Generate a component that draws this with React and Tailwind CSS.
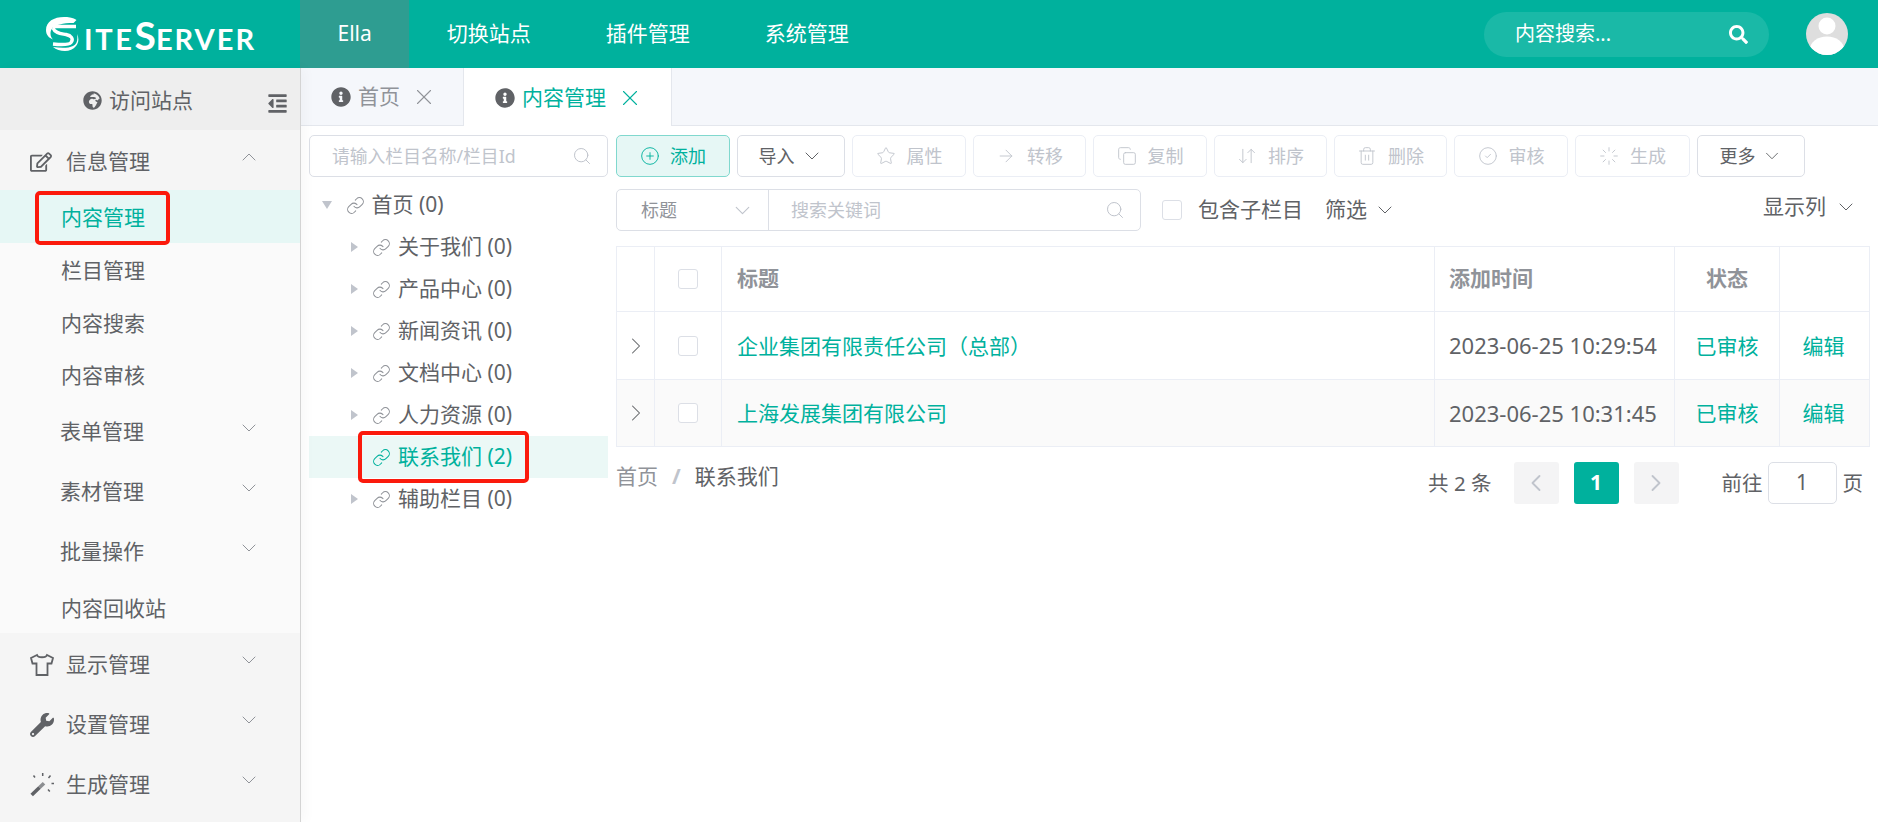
import {
  ArrowDownUp,
  ArrowRight,
  ChevronDown,
  ChevronLeft,
  ChevronRight,
  ChevronUp,
  CircleCheck,
  CirclePlus,
  Copy,
  Link,
  Loader,
  Search,
  Star,
  Trash2,
  X,
} from 'lucide-react';
import {
  FaGlobeAfrica,
  FaInfoCircle,
  FaOutdent,
  FaRegEdit,
  FaSearch,
  FaWrench,
} from 'react-icons/fa';

const font = 'font-["Noto_Sans","Noto_Sans_CJK_SC",sans-serif]';

function Logo() {
  return (
    <div className="flex h-full w-[300px] items-center pl-[45px] text-white">
      <svg viewBox="0 0 40 36" className="h-[36px] w-[40px] shrink-0" fill="none" stroke="white">
        <path d="M25 1.500C12-.5 1 4 1 14c0 5 3 8 7 9.500-3-3-3.500-8-.5-11.500 3-3 10-5 21-5l3-3C30 3 28 2 25 1.500z" fill="white" stroke="none" />
        <path d="M8 10.500h23M8 12c2 5.500 8 5.500 13 6.500s8 4 5 8c-2 2.500-8 2.500-18 1.500" strokeWidth="3.400" />
        <path d="M8 31c6 5 18 6 23-1 3-4 3-8 1-12 1 6 0 10-4 12-5 2.500-13 2-20 1z" fill="white" stroke="none" />
      </svg>
      <div className="-ml-[1px] flex items-baseline pt-[2px] font-['Lato',sans-serif] leading-none font-bold">
        <span className="text-[29px] tracking-[2.600px]">ITE</span>
        <span className="text-[39px]">S</span>
        <span className="text-[29px] tracking-[2px]">ERVER</span>
      </div>
    </div>
  );
}

function TopBar() {
  return (
    <header className="flex h-[68px] shrink-0 items-center bg-[#00b19d] text-[21px] text-white">
      <Logo />
      <div className="flex h-full items-center bg-[#2e9d91] px-[37.500px]">Ella</div>
      <div className="flex h-full items-center px-[37.500px]">切换站点</div>
      <div className="flex h-full items-center px-[37.500px]">插件管理</div>
      <div className="flex h-full items-center px-[37.500px]">系统管理</div>
      <div className="ml-auto flex h-[45px] w-[285px] items-center justify-between rounded-full bg-white/10 pr-[21px] pl-[31px] text-[20px]">
        内容搜索...
        <FaSearch className="h-[19px] w-[19px]" />
      </div>
      <div className="mr-[30px] ml-[37px] h-[42px] w-[42px] overflow-hidden rounded-full bg-[#dedede]">
        <svg viewBox="0 0 42 42" className="h-full w-full" fill="white">
          <circle cx="21" cy="13" r="8.500" />
          <ellipse cx="21" cy="36" rx="17" ry="12.500" />
        </svg>
      </div>
    </header>
  );
}

function SideGroup({ icon, label, open }) {
  return (
    <div className="flex h-[60px] items-center pt-[3px] pr-[39px] pl-[30px] text-[21px] text-[#606266]">
      <span className="flex w-[36px] shrink-0 items-center text-[#606266]">{icon}</span>
      {label}
      {open ? (
        <ChevronUp className="mb-[9px] ml-auto h-[24px] w-[24px] text-[#909399]" strokeWidth={1} />
      ) : (
        <ChevronDown className="mb-[9px] ml-auto h-[24px] w-[24px] text-[#909399]" strokeWidth={1} />
      )}
    </div>
  );
}

function SubItem({ label, active }) {
  return (
    <div
      className={
        active
          ? 'relative flex h-[53px] items-center bg-[#e6f7f5] pt-[3px] pl-[61px] text-[21px] text-[#00b19d]'
          : 'flex h-[52.500px] items-center pt-[3px] pl-[61px] text-[21px] text-[#606266]'
      }
    >
      {label}
      {active && (
        <span className="absolute top-[1px] left-[35px] h-[54px] w-[135px] rounded-[5px] border-[4px] border-[#fb1a0c]" />
      )}
    </div>
  );
}

function SubGroup({ label }) {
  return (
    <div className="flex h-[60px] items-center pt-[3px] pr-[39px] pl-[60px] text-[21px] text-[#606266]">
      {label}
      <ChevronDown className="mb-[9px] ml-auto h-[24px] w-[24px] text-[#909399]" strokeWidth={1} />
    </div>
  );
}

function Sidebar() {
  return (
    <aside className="z-10 w-[301px] shrink-0 border-r border-[#d4d4d4] bg-[#f5f5f5] shadow-[4px_0_12px_rgba(0,0,0,0.03)]">
      <div className="relative flex h-[62px] items-center justify-center bg-[#eeeeee] pt-[3px] pr-[24px] text-[21px] text-[#606266]">
        <FaGlobeAfrica className="mr-[7px] h-[19px] w-[19px]" />
        访问站点
        <FaOutdent className="absolute top-[25px] right-[12px] h-[21px] w-[21px]" />
      </div>
      <SideGroup icon={<FaRegEdit className="h-[22px] w-[22px]" />} label="信息管理" open />
      <div className="bg-[#fafafa]">
        <SubItem label="内容管理" active />
        <SubItem label="栏目管理" />
        <SubItem label="内容搜索" />
        <SubItem label="内容审核" />
        <SubGroup label="表单管理" />
        <SubGroup label="素材管理" />
        <SubGroup label="批量操作" />
        <SubItem label="内容回收站" />
      </div>
      <SideGroup
        icon={
          <svg viewBox="0 0 24 24" className="h-[24px] w-[24px]" fill="none" stroke="currentColor" strokeWidth="1.800">
            <path d="M7 2 1 5l1.500 5.500H6.500V22h11V10.500h4L23 5l-6-3c-1 3-9 3-10 0z" />
          </svg>
        }
        label="显示管理"
      />
      <SideGroup icon={<FaWrench className="h-[24px] w-[24px]" />} label="设置管理" />
      <SideGroup
        icon={
          <svg viewBox="0 0 24 24" className="h-[24px] w-[24px]" fill="none" stroke="currentColor">
            <path d="M1.700 22 9.500 14.500" strokeWidth="3.600" />
            <path d="M9.500 14.500 14 10.300" strokeWidth="3.600" strokeOpacity="0.700" />
            <path d="M12.700 0v3M3.500 2.500l1.500 2M20.500 2.500l-2 2.500M21.500 10.500h3M18 16.500l1.800 2" strokeWidth="1.500" />
          </svg>
        }
        label="生成管理"
      />
    </aside>
  );
}

function TabBar() {
  return (
    <div className="flex h-[58px] shrink-0 border-b border-[#e4e7ed] bg-[#f5f7fb] text-[21px]">
      <div className="flex w-[163px] items-center border-r border-[#e4e7ed] pt-[1px] pl-[30px] text-[#909399]">
        <FaInfoCircle className="mr-[7px] h-[20px] w-[20px] text-[#606266]" />
        首页
        <X className="ml-[11px] h-[26px] w-[26px]" strokeWidth={1} />
      </div>
      <div className="-mb-[1px] flex w-[208px] items-center border-r border-[#e4e7ed] bg-white pt-[1px] pl-[31px] text-[#00b19d]">
        <FaInfoCircle className="mr-[7px] h-[20px] w-[20px] text-[#606266]" />
        内容管理
        <X className="ml-[11px] h-[26px] w-[26px]" strokeWidth={1} />
      </div>
    </div>
  );
}

function TreeRow({ label, top, active, leaf }) {
  return (
    <div
      className={
        active
          ? 'relative flex h-[42px] items-center bg-[#ebf8f6] pl-[63px] text-[#00b19d]'
          : top
            ? 'flex h-[42px] items-center pl-[13px] text-[#606266]'
            : 'flex h-[42px] items-center pl-[42px] text-[#606266]'
      }
    >
      {!leaf && (
        <span
          className={
            top
              ? 'mr-[13.500px] h-0 w-0 border-x-[5px] border-t-[8px] border-x-transparent border-t-[#c0c4cc]'
              : 'mr-[14px] h-0 w-0 border-y-[5px] border-l-[7px] border-y-transparent border-l-[#c0c4cc]'
          }
        />
      )}
      <Link
        className={
          active
            ? 'mr-[7px] h-[19px] w-[19px] text-[#00b19d]'
            : 'mr-[7px] h-[19px] w-[19px] text-[#909399]'
        }
        strokeWidth={1.300}
      />
      {label}
      {active && (
        <span className="absolute -top-[5px] left-[49px] h-[52px] w-[171px] rounded-[5px] border-[4px] border-[#fb1a0c]" />
      )}
    </div>
  );
}

function Tree() {
  return (
    <div className="w-[299px] shrink-0 text-[21px]">
      <div className="flex h-[42px] items-center justify-between rounded-[5px] border border-[#dcdfe6] pr-[15px] pl-[22px] text-[17.800px] text-[#c0c4cc]">
        请输入栏目名称/栏目Id
        <Search className="h-[20px] w-[20px]" strokeWidth={1.200} />
      </div>
      <div className="mt-[7px]">
        <TreeRow label="首页 (0)" top />
        <TreeRow label="关于我们 (0)" />
        <TreeRow label="产品中心 (0)" />
        <TreeRow label="新闻资讯 (0)" />
        <TreeRow label="文档中心 (0)" />
        <TreeRow label="人力资源 (0)" />
        <TreeRow label="联系我们 (2)" active leaf />
        <TreeRow label="辅助栏目 (0)" />
      </div>
    </div>
  );
}

function ToolButton({ icon, label, width }) {
  return (
    <button className={`flex h-[42px] items-center justify-center gap-[11px] rounded-[5px] border border-[#ebeef5] text-[18px] text-[#c0c4cc] ${width}`}>
      {icon}
      {label}
    </button>
  );
}

function Toolbar() {
  const ic = 'h-[20px] w-[20px]';
  return (
    <div className="flex gap-[7px]">
      <button className="flex h-[42px] w-[114px] items-center justify-center gap-[10px] rounded-[5px] border border-[#80d8ce] bg-[#e6f7f5] text-[18px] text-[#00b19d]">
        <CirclePlus className={ic} strokeWidth={1.100} />
        添加
      </button>
      <button className="flex h-[42px] w-[108px] items-center justify-center gap-[5px] rounded-[5px] border border-[#dcdfe6] text-[18px] text-[#606266]">
        导入
        <ChevronDown className="h-[24px] w-[24px]" strokeWidth={1} />
      </button>
      <ToolButton icon={<Star className={ic} strokeWidth={1.100} />} label="属性" width="w-[114px]" />
      <ToolButton icon={<ArrowRight className={ic} strokeWidth={1.100} />} label="转移" width="w-[113px]" />
      <ToolButton icon={<Copy className={ic} strokeWidth={1.100} />} label="复制" width="w-[114px]" />
      <ToolButton icon={<ArrowDownUp className={ic} strokeWidth={1.100} />} label="排序" width="w-[113px]" />
      <ToolButton icon={<Trash2 className={ic} strokeWidth={1.100} />} label="删除" width="w-[113px]" />
      <ToolButton icon={<CircleCheck className={ic} strokeWidth={1.100} />} label="审核" width="w-[114px]" />
      <ToolButton icon={<Loader className={ic} strokeWidth={1.100} />} label="生成" width="w-[115px]" />
      <button className="flex h-[42px] w-[108px] items-center justify-center gap-[5px] rounded-[5px] border border-[#dcdfe6] text-[18px] text-[#606266]">
        更多
        <ChevronDown className="h-[22px] w-[22px]" strokeWidth={1} />
      </button>
    </div>
  );
}

function FilterRow() {
  return (
    <div className="mt-[12px] flex h-[42px] items-center text-[21px] text-[#606266]">
      <div className="flex h-full w-[525px] rounded-[5px] border border-[#dcdfe6] text-[18px]">
        <div className="flex w-[152px] items-center justify-between border-r border-[#dcdfe6] pr-[13px] pl-[24px] text-[#909399]">
          标题
          <ChevronDown className="h-[25px] w-[25px] text-[#c0c4cc]" strokeWidth={1.100} />
        </div>
        <div className="flex flex-1 items-center justify-between pr-[15px] pl-[22px] text-[#c0c4cc]">
          搜索关键词
          <Search className="h-[20px] w-[20px]" strokeWidth={1.200} />
        </div>
      </div>
      <span className="mr-[16px] ml-[21px] h-[20px] w-[20px] rounded-[3px] border border-[#dcdfe6] bg-white" />
      包含子栏目
      <span className="ml-[22px]">筛选</span>
      <ChevronDown className="ml-[6px] h-[24px] w-[24px]" strokeWidth={1} />
      <span className="mb-[6px] ml-auto">显示列</span>
      <ChevronDown className="mr-[11px] mb-[6px] ml-[8px] h-[24px] w-[24px]" strokeWidth={1} />
    </div>
  );
}

const rows = [
  { title: '企业集团有限责任公司（总部）', time: '2023-06-25 10:29:54' },
  { title: '上海发展集团有限公司', time: '2023-06-25 10:31:45' },
];

function ContentTable() {
  const cell = 'border border-[#ebeef5] px-[15px]';
  const timeCell = 'border border-[#ebeef5] px-[14px]';
  return (
    <table className="mt-[15px] w-[1253px] table-fixed border-collapse text-[21px]">
      <colgroup>
        <col className="w-[38px]" />
        <col className="w-[67px]" />
        <col className="w-[713px]" />
        <col className="w-[240px]" />
        <col className="w-[105px]" />
        <col className="w-[90px]" />
      </colgroup>
      <thead>
        <tr className="h-[65px] font-bold text-[#909399]">
          <th className={cell} />
          <th className={cell}>
            <span className="mx-auto block h-[20px] w-[20px] rounded-[3px] border border-[#dcdfe6]" />
          </th>
          <th className={`${cell} text-left`}>标题</th>
          <th className={`${timeCell} text-left`}>添加时间</th>
          <th className={`${cell} text-center`}>状态</th>
          <th className={cell} />
        </tr>
      </thead>
      <tbody>
        {rows.map((row, i) => (
          <tr key={row.time} className={i === 1 ? 'h-[67px] bg-[#fafafa]' : 'h-[68px]'}>
            <td className="border border-[#ebeef5] text-center text-[#606266]">
              <ChevronRight className="mx-auto h-[28px] w-[28px]" strokeWidth={0.900} />
            </td>
            <td className={cell}>
              <span className="mx-auto block h-[20px] w-[20px] rounded-[3px] border border-[#dcdfe6] bg-white" />
            </td>
            <td className={`${cell} pt-[2px] text-[#00b19d]`}>{row.title}</td>
            <td className={`${timeCell} text-[22px] text-[#606266]`}>{row.time}</td>
            <td className={`${cell} pt-[2px] text-center text-[#00b19d]`}>已审核</td>
            <td className={`${cell} pt-[2px] pr-[17px] text-center text-[#00b19d]`}>编辑</td>
          </tr>
        ))}
      </tbody>
    </table>
  );
}

function Footer() {
  return (
    <div className="flex items-start text-[21px] text-[#606266]">
      <div className="mt-[14px] flex items-center">
        <span className="text-[#909399]">首页</span>
        <span className="mx-[14px] font-bold text-[#c0c4cc]">/</span>
        联系我们
      </div>
      <div className="mt-[15px] ml-auto flex items-center">
        <span className="mr-[22px] text-[20.500px]">共 2 条</span>
        <span className="flex h-[42px] w-[45px] items-center justify-center rounded-[3px] bg-[#f4f4f5] text-[#c0c4cc]">
          <ChevronLeft className="h-[28px] w-[28px]" strokeWidth={1.600} />
        </span>
        <span className="mx-[15px] flex h-[42px] w-[45px] items-center justify-center rounded-[3px] bg-[#00b19d] font-bold text-white">
          1
        </span>
        <span className="flex h-[42px] w-[45px] items-center justify-center rounded-[3px] bg-[#f4f4f5] text-[#c0c4cc]">
          <ChevronRight className="h-[28px] w-[28px]" strokeWidth={1.600} />
        </span>
        <span className="mr-[5px] ml-[43px] text-[20.500px]">前往</span>
        <span className="flex h-[42px] w-[69px] items-center justify-center rounded-[5px] border border-[#dcdfe6]">
          1
        </span>
        <span className="mr-[6px] ml-[6px] text-[20.500px]">页</span>
      </div>
    </div>
  );
}

export default function App() {
  return (
    <div className={`flex h-screen flex-col overflow-hidden bg-white ${font}`}>
      <TopBar />
      <div className="flex min-h-0 flex-1">
        <Sidebar />
        <main className="min-w-0 flex-1">
          <TabBar />
          <div className="flex gap-[8px] pt-[9px] pl-[8px]">
            <Tree />
            <div className="w-[1253px]">
              <Toolbar />
              <FilterRow />
              <ContentTable />
              <Footer />
            </div>
          </div>
        </main>
      </div>
    </div>
  );
}
